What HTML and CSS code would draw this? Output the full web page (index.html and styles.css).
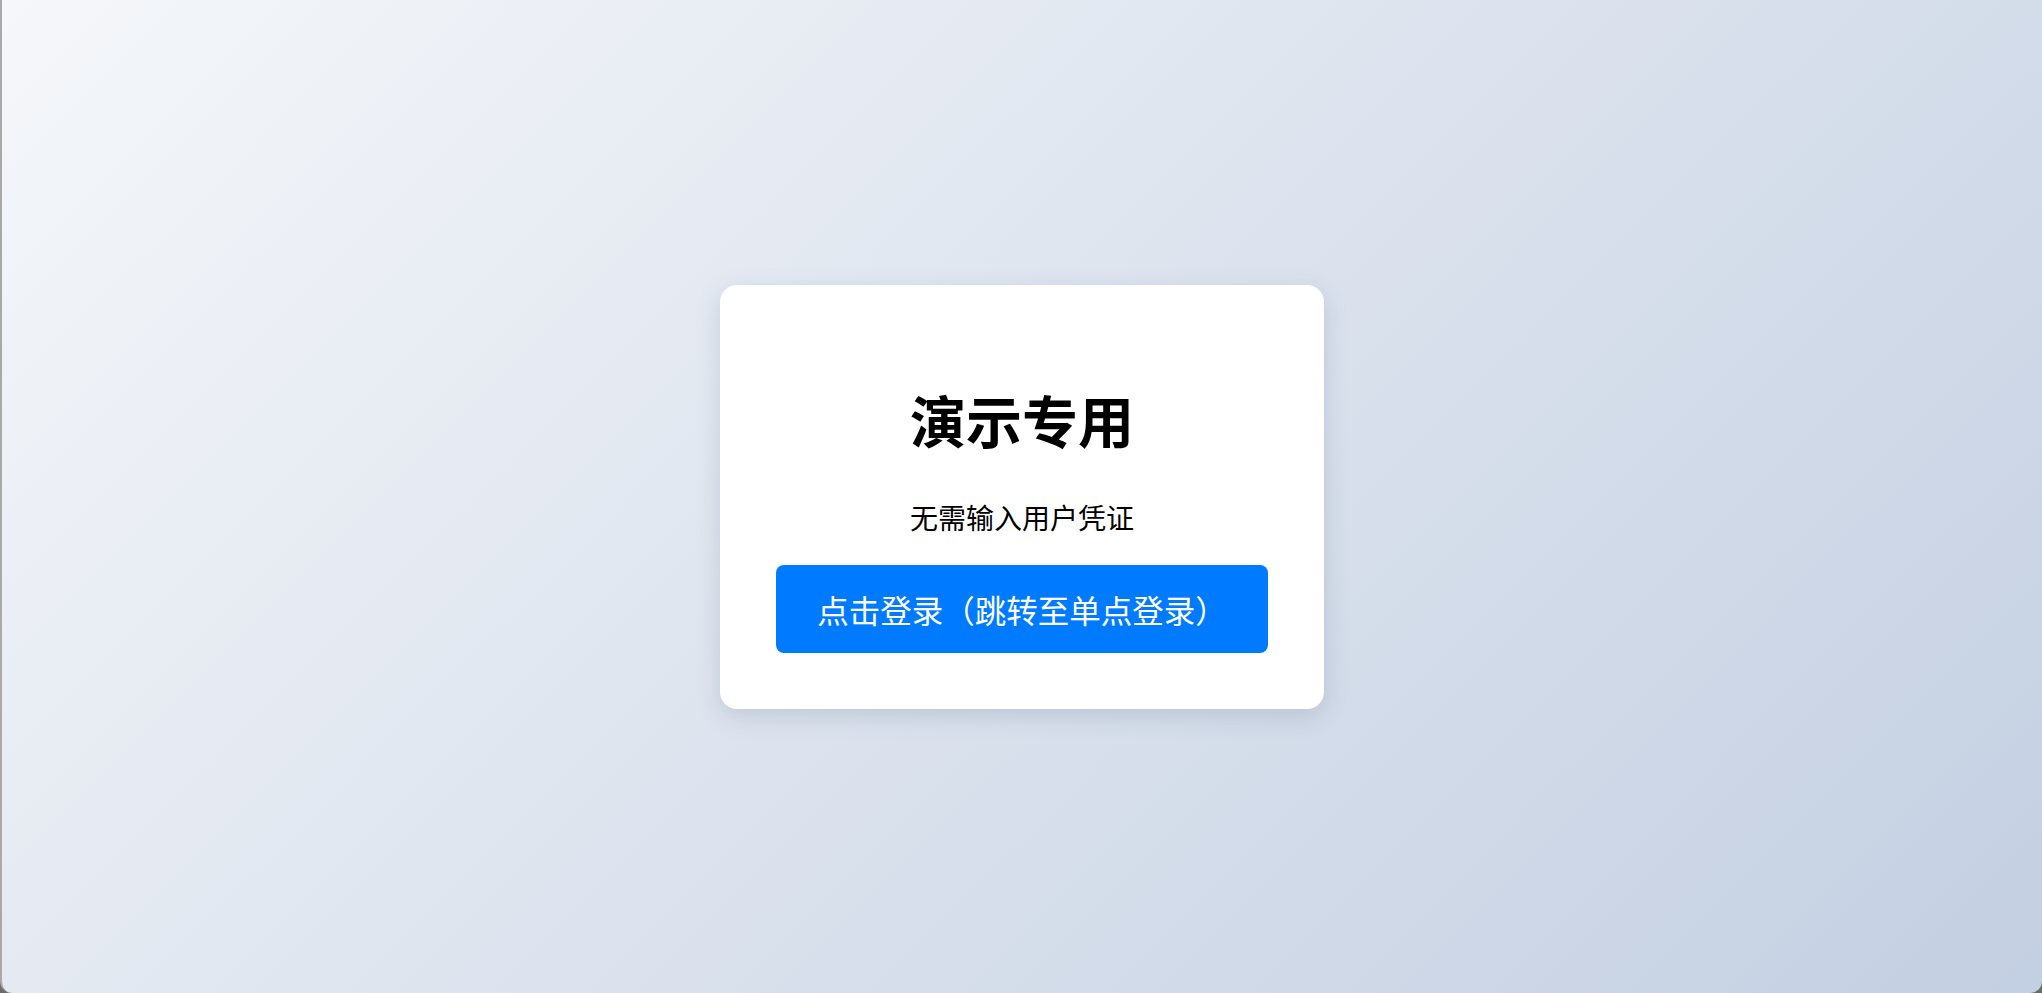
FILE: index.html
```html
<!DOCTYPE html>
<html lang="zh-CN">
<head>
<meta charset="utf-8">
<title>演示专用</title>
<link rel="stylesheet" href="styles.css">
</head>
<body>
<div class="screen">
  <main class="card">
    <h1 class="title">演示专用</h1>
    <p class="subtitle">无需输入用户凭证</p>
    <button class="login-btn" type="button">点击登录（跳转至单点登录）</button>
  </main>
</div>
</body>
</html>
```
FILE: styles.css
```css
html {
  background: #6b6b6b;
}
body {
  margin: 0;
  font-family: "Noto Sans CJK SC", "Noto Sans", sans-serif;
  font-size: 28px;
}
.screen {
  box-sizing: border-box;
  height: 100vh;
  border-left: 2px solid #a9a9a9;
  border-radius: 0 0 12px 12px;
  background: linear-gradient(135deg, #f5f7fa 0%, #c3cfe2 100%);
  display: flex;
  align-items: center;
  justify-content: center;
}
.card {
  width: 492px;
  padding: 56px;
  background: #ffffff;
  border-radius: 17px;
  box-shadow: 0 7px 24px rgba(60, 75, 110, 0.18);
  text-align: center;
}
.title {
  font-size: 56px;
  font-weight: 700;
  margin: 37.5px 0;
  color: #000;
}
.subtitle {
  font-size: 28px;
  margin: 28px 0;
  color: #000;
}
.login-btn {
  display: block;
  width: 100%;
  padding: 21px 0;
  border: none;
  border-radius: 8px;
  background: #007bff;
  color: #ffffff;
  font-family: inherit;
  font-size: 31.5px;
  line-height: normal;
  cursor: pointer;
}
```
